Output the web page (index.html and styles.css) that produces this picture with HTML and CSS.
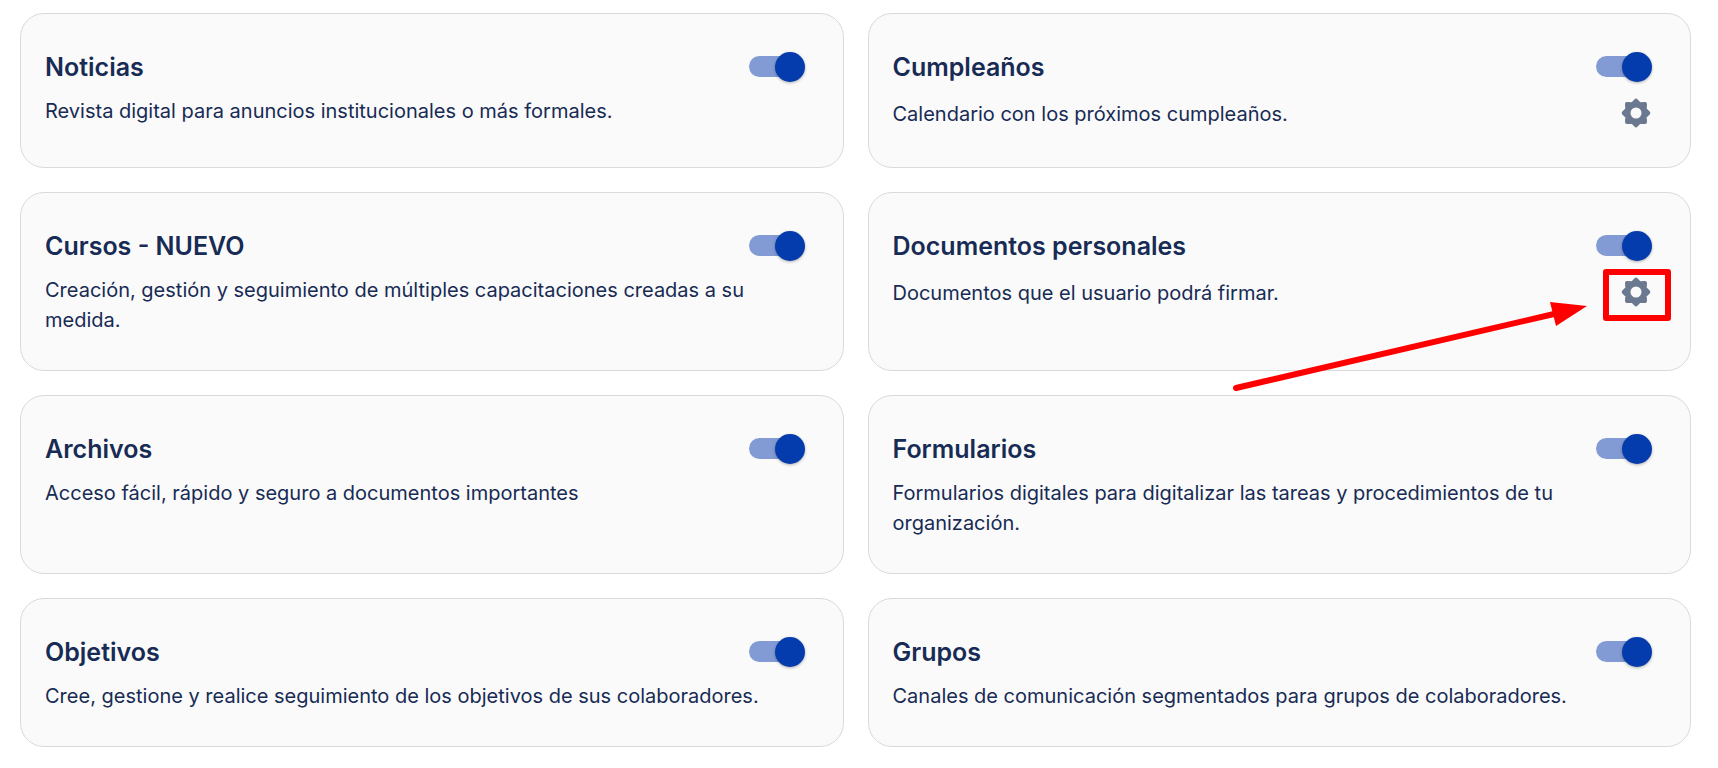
FILE: index.html
```html
<!DOCTYPE html>
<html lang="es">
<head>
<meta charset="utf-8">
<meta name="viewport" content="width=device-width, initial-scale=1">
<title>Módulos</title>
<link rel="stylesheet" href="styles.css">
</head>
<body>
<svg class="sprite" aria-hidden="true">
  <symbol id="gear" viewBox="-18 -17 36 36">
    <path d="M0-12.3Q1-8.6 3.6-8.7T9-9Q8-6.2 8.7-3.6T12.3 0Q8.6 1 8.7 3.6T9 9Q6.2 8 3.6 8.7T0 12.3Q-1 8.6-3.6 8.7T-9 9Q-8 6.2-8.7 3.6T-12.3 0Q-8.6-1-8.7-3.6T-9-9Q-6.2-8-3.6-8.7T0-12.3Z" fill="currentColor"/>
    <path d="M0-12.3 3.6-8.7 9-9 8.7-3.6 12.3 0 8.7 3.6 9 9 3.6 8.7 0 12.3-3.6 8.7-9 9-8.7 3.6-12.3 0-8.7-3.6-9-9-3.6-8.7Z" fill="currentColor" stroke="currentColor" stroke-width="4" stroke-linejoin="round"/>
    <circle r="5.5" fill="#fafafa"/>
  </symbol>
</svg>
<main class="modules">
  <section class="card">
    <div class="card-head"><h2 class="card-title"><label for="noticias">Noticias</label></h2><input class="switch" type="checkbox" role="switch" id="noticias" checked></div>
    <div class="card-body"><p class="card-text">Revista digital para anuncios institucionales o más formales.</p></div>
  </section>
  <section class="card">
    <div class="card-head"><h2 class="card-title"><label for="cumple">Cumpleaños</label></h2><input class="switch" type="checkbox" role="switch" id="cumple" checked></div>
    <div class="card-body"><p class="card-text">Calendario con los próximos cumpleaños.</p>
      <button class="settings" type="button" aria-label="Configurar cumpleaños"><svg class="gear"><use href="#gear"/></svg></button></div>
  </section>
  <section class="card">
    <div class="card-head"><h2 class="card-title"><label for="cursos">Cursos - NUEVO</label></h2><input class="switch" type="checkbox" role="switch" id="cursos" checked></div>
    <div class="card-body"><p class="card-text">Creación, gestión y seguimiento de múltiples capacitaciones creadas a su medida.</p></div>
  </section>
  <section class="card">
    <div class="card-head"><h2 class="card-title"><label for="documentos">Documentos personales</label></h2><input class="switch" type="checkbox" role="switch" id="documentos" checked></div>
    <div class="card-body"><p class="card-text">Documentos que el usuario podrá firmar.</p>
      <button class="settings" type="button" aria-label="Configurar documentos personales"><svg class="gear"><use href="#gear"/></svg>
        <span class="highlight"></span>
        <svg class="arrow" viewBox="0 0 360 96" aria-hidden="true"><path d="M6 90 324 16" fill="none" stroke="#f00" stroke-width="6" stroke-linecap="round"/><path d="M357 8 320 4 326 28Z" fill="#f00"/></svg>
      </button></div>
  </section>
  <section class="card">
    <div class="card-head"><h2 class="card-title"><label for="archivos">Archivos</label></h2><input class="switch" type="checkbox" role="switch" id="archivos" checked></div>
    <div class="card-body"><p class="card-text">Acceso fácil, rápido y seguro a documentos importantes</p></div>
  </section>
  <section class="card">
    <div class="card-head"><h2 class="card-title"><label for="formularios">Formularios</label></h2><input class="switch" type="checkbox" role="switch" id="formularios" checked></div>
    <div class="card-body"><p class="card-text">Formularios digitales para digitalizar las tareas y procedimientos de tu organización.</p></div>
  </section>
  <section class="card">
    <div class="card-head"><h2 class="card-title"><label for="objetivos">Objetivos</label></h2><input class="switch" type="checkbox" role="switch" id="objetivos" checked></div>
    <div class="card-body"><p class="card-text">Cree, gestione y realice seguimiento de los objetivos de sus colaboradores.</p></div>
  </section>
  <section class="card">
    <div class="card-head"><h2 class="card-title"><label for="grupos">Grupos</label></h2><input class="switch" type="checkbox" role="switch" id="grupos" checked></div>
    <div class="card-body"><p class="card-text">Canales de comunicación segmentados para grupos de colaboradores.</p></div>
  </section>
</main>
</body>
</html>
```
FILE: styles.css
```css
* {
  box-sizing: border-box;
}

body {
  margin: 0;
  background: #fff;
  color: #172b54;
  font-family: Inter, "Liberation Sans", sans-serif;
}

.sprite {
  position: absolute;
  width: 0;
  height: 0;
}

.modules {
  display: grid;
  grid-template-columns: repeat(2, minmax(0, 1fr));
  gap: 24px;
  padding: 13px 27px 20px 20px;
}

.card {
  display: flex;
  flex-direction: column;
  gap: 12px;
  padding: 36px 36px 35px 24px;
  background: #fafafa;
  border: 1px solid #dadada;
  border-radius: 24px;
}

.card-head {
  display: flex;
  align-items: center;
  justify-content: space-between;
}

.card-title {
  margin: 0;
  font-size: 25px;
  font-weight: 600;
  line-height: 34px;
}

.card-body {
  display: flex;
  align-items: flex-start;
  justify-content: space-between;
}

.card-text {
  margin: 0;
  font-size: 20px;
  line-height: 30px;
}

.card-body:has(.settings) {
  align-items: center;
}

.switch {
  appearance: none;
  position: relative;
  flex: none;
  width: 56px;
  height: 30px;
  margin: 0 2px 0 0;
  cursor: pointer;
}

.switch::before {
  content: "";
  position: absolute;
  inset: 4px 5px 5px 0;
  border-radius: 11px;
  background: #bbb;
}

.switch::after {
  content: "";
  position: absolute;
  top: 0;
  left: 0;
  width: 30px;
  height: 30px;
  border-radius: 50%;
  background: #fff;
  box-shadow: 0 1px 3px rgba(0, 0, 0, 0.3);
}

.switch:checked::before {
  background: #839bd4;
}

.switch:checked::after {
  left: 26px;
  background: #053cad;
}

.settings {
  position: relative;
  flex: none;
  width: 36px;
  height: 36px;
  padding: 0;
  border: 0;
  background: none;
  color: #6b7990;
  cursor: pointer;
}

.gear {
  display: block;
  width: 36px;
  height: 36px;
}

.highlight {
  position: absolute;
  top: -6px;
  left: -15px;
  width: 68px;
  height: 52px;
  border: 6px solid #f00;
  border-radius: 3px;
}

.arrow {
  position: absolute;
  top: 23px;
  right: 64px;
  width: 360px;
  height: 96px;
  pointer-events: none;
  z-index: 1;
}
```
